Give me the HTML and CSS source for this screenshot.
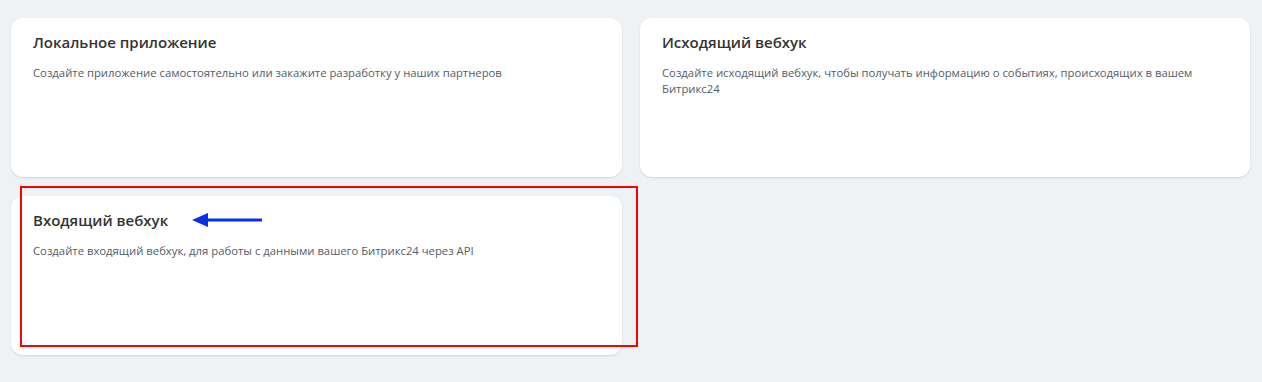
FILE: index.html
```html
<!DOCTYPE html>
<html lang="ru">
<head>
<meta charset="utf-8">
<link rel="stylesheet" href="styles.css">
</head>
<body>
<div class="grid">
  <div class="card">
    <div class="title">Локальное приложение</div>
    <div class="desc">Создайте приложение самостоятельно или закажите разработку у наших партнеров</div>
  </div>
  <div class="card">
    <div class="title">Исходящий вебхук</div>
    <div class="desc">Создайте исходящий вебхук, чтобы получать информацию о событиях, происходящих в вашем Битрикс24</div>
  </div>
  <div class="card">
    <div class="title">Входящий вебхук</div>
    <div class="desc">Создайте входящий вебхук, для работы с данными вашего Битрикс24 через API</div>
  </div>
</div>
<div class="highlight"></div>
<svg class="arrow" width="72" height="16" viewBox="0 0 72 16">
  <path d="M12 8H70" stroke="#0a2ee6" stroke-width="3"/>
  <path d="M0 8L16 1V15Z" fill="#0a2ee6"/>
</svg>
</body>
</html>
```
FILE: styles.css
```css
html, body {
  margin: 0;
  padding: 0;
  background: #eef2f4;
  font-family: "Open Sans", "Noto Sans", sans-serif;
}
body {
  position: relative;
  width: 1262px;
  height: 382px;
  overflow: hidden;
}
.grid {
  display: grid;
  grid-template-columns: 611px 610px;
  column-gap: 18px;
  row-gap: 19px;
  padding: 18px 12px 0 11px;
}
.card {
  background: #fff;
  border-radius: 12px;
  height: 159px;
  box-sizing: border-box;
  padding: 13px 22px 0 22px;
  box-shadow: 0 1px 2px rgba(0, 0, 0, 0.12);
}
.title {
  font-size: 15px;
  font-weight: 600;
  color: #333;
  line-height: 22px;
}
.desc {
  margin-top: 12px;
  font-size: 11.3px;
  line-height: 16px;
  color: #535c69;
}
.highlight {
  position: absolute;
  left: 20px;
  top: 186px;
  width: 618px;
  height: 161px;
  box-sizing: border-box;
  border: 2px solid #ff0000;
}
.arrow {
  position: absolute;
  left: 192px;
  top: 212px;
}
```
